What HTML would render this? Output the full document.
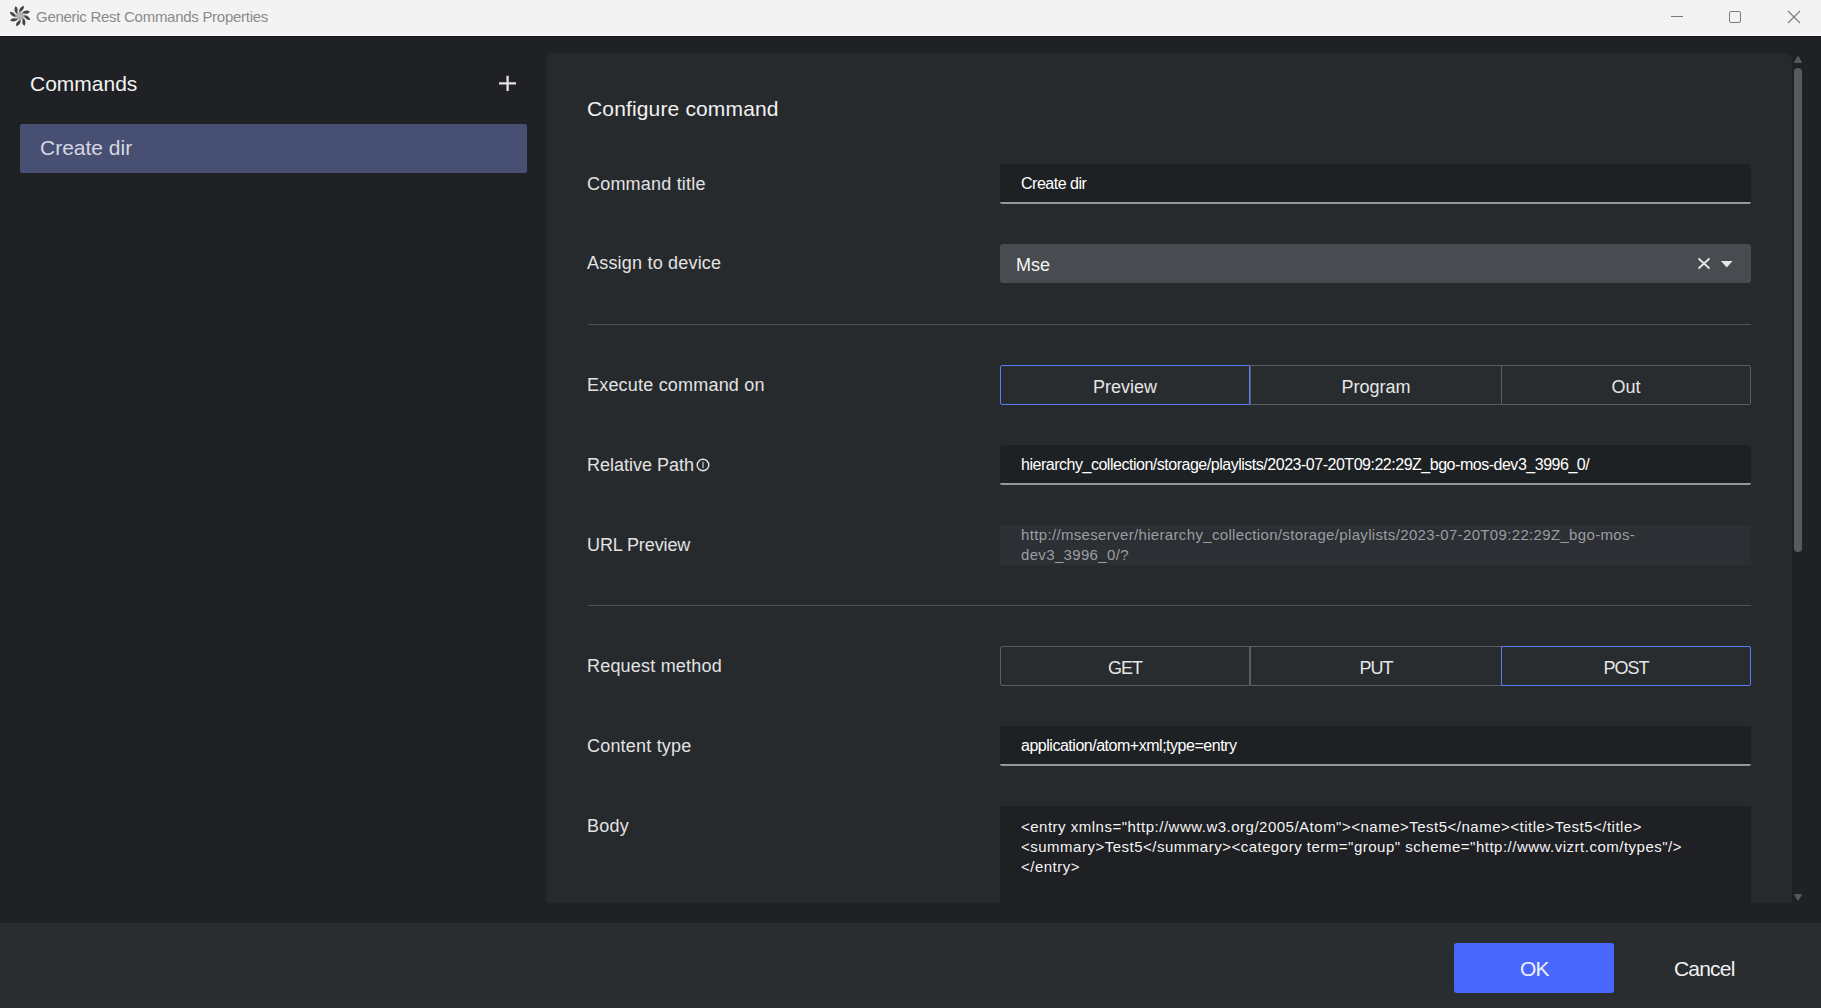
<!DOCTYPE html>
<html><head><meta charset="utf-8">
<style>
*{margin:0;padding:0;box-sizing:border-box}
html,body{width:1821px;height:1008px;overflow:hidden;background:#1f2125;font-family:"Liberation Sans",sans-serif}
.a{position:absolute}
.nw{white-space:nowrap;line-height:1}
#titlebar{left:0;top:0;width:1821px;height:35px;background:#f3f3f3}
#tline{left:0;top:35px;width:1821px;height:1px;background:#ffffff}
#tdark{left:0;top:36px;width:1821px;height:1px;background:#16191d}
.ttl{left:36px;top:9px;font-size:15px;color:#8a8a8a;letter-spacing:-0.28px}
.lbl{color:#e2e2e2;font-size:18px;left:587px;letter-spacing:0.2px}
#panel{left:547px;top:53px;width:1245px;height:850px;background:#262a2d;border-radius:7px 7px 0 0}
.inp{left:1000px;width:751px;height:40px;background:#1e2124;border-bottom:2px solid #979797;border-radius:2px 2px 2px 2px;background-clip:padding-box}
.txt{left:1021px;color:#ffffff;font-size:16px;letter-spacing:-0.48px;margin-top:1px}
.seg{height:40px;top:0;border:1px solid #5a5d61;background:#282c2f;color:#e6e6e6;font-size:18px;text-align:center;line-height:38px;padding-top:2px}
.act{border-color:#5c7cf6}
.div{left:588px;width:1163px;height:1px;background:#505357}
#footer{left:0;top:923px;width:1821px;height:85px;background:#2a2d30}
</style></head><body>
<div class="a" id="titlebar"></div>
<div class="a" id="tline"></div>
<div class="a" id="tdark"></div>
<svg class="a" style="left:8px;top:4px" width="24" height="24" viewBox="-12 -12 24 24"><circle r="3.6" fill="#b4b4b4"/><g fill="#9a9a9a"><path d="M -2.2,-3.4 C -1.4,-3.9 -0.9,-4.4 -0.5,-5.2 L 0.1,-5 C -0.3,-3.6 -0.8,-2.5 -1.5,-1.8 Z" transform="rotate(-22)"/><path d="M -2.2,-3.4 C -1.4,-3.9 -0.9,-4.4 -0.5,-5.2 L 0.1,-5 C -0.3,-3.6 -0.8,-2.5 -1.5,-1.8 Z" transform="rotate(23)"/><path d="M -2.2,-3.4 C -1.4,-3.9 -0.9,-4.4 -0.5,-5.2 L 0.1,-5 C -0.3,-3.6 -0.8,-2.5 -1.5,-1.8 Z" transform="rotate(68)"/><path d="M -2.2,-3.4 C -1.4,-3.9 -0.9,-4.4 -0.5,-5.2 L 0.1,-5 C -0.3,-3.6 -0.8,-2.5 -1.5,-1.8 Z" transform="rotate(113)"/><path d="M -2.2,-3.4 C -1.4,-3.9 -0.9,-4.4 -0.5,-5.2 L 0.1,-5 C -0.3,-3.6 -0.8,-2.5 -1.5,-1.8 Z" transform="rotate(158)"/><path d="M -2.2,-3.4 C -1.4,-3.9 -0.9,-4.4 -0.5,-5.2 L 0.1,-5 C -0.3,-3.6 -0.8,-2.5 -1.5,-1.8 Z" transform="rotate(203)"/><path d="M -2.2,-3.4 C -1.4,-3.9 -0.9,-4.4 -0.5,-5.2 L 0.1,-5 C -0.3,-3.6 -0.8,-2.5 -1.5,-1.8 Z" transform="rotate(248)"/><path d="M -2.2,-3.4 C -1.4,-3.9 -0.9,-4.4 -0.5,-5.2 L 0.1,-5 C -0.3,-3.6 -0.8,-2.5 -1.5,-1.8 Z" transform="rotate(293)"/></g><g fill="#464646"><path d="M -2.2,-3.4 C -3.6,-5.5 -3.2,-8.8 -0.6,-10.8 C 0.9,-9.4 0.8,-7 -0.6,-5.2 C -1,-4.5 -1.6,-3.9 -2.2,-3.4 Z" transform="rotate(-22)"/><path d="M -2.2,-3.4 C -3.6,-5.5 -3.2,-8.8 -0.6,-10.8 C 0.9,-9.4 0.8,-7 -0.6,-5.2 C -1,-4.5 -1.6,-3.9 -2.2,-3.4 Z" transform="rotate(23)"/><path d="M -2.2,-3.4 C -3.6,-5.5 -3.2,-8.8 -0.6,-10.8 C 0.9,-9.4 0.8,-7 -0.6,-5.2 C -1,-4.5 -1.6,-3.9 -2.2,-3.4 Z" transform="rotate(68)"/><path d="M -2.2,-3.4 C -3.6,-5.5 -3.2,-8.8 -0.6,-10.8 C 0.9,-9.4 0.8,-7 -0.6,-5.2 C -1,-4.5 -1.6,-3.9 -2.2,-3.4 Z" transform="rotate(113)"/><path d="M -2.2,-3.4 C -3.6,-5.5 -3.2,-8.8 -0.6,-10.8 C 0.9,-9.4 0.8,-7 -0.6,-5.2 C -1,-4.5 -1.6,-3.9 -2.2,-3.4 Z" transform="rotate(158)"/><path d="M -2.2,-3.4 C -3.6,-5.5 -3.2,-8.8 -0.6,-10.8 C 0.9,-9.4 0.8,-7 -0.6,-5.2 C -1,-4.5 -1.6,-3.9 -2.2,-3.4 Z" transform="rotate(203)"/><path d="M -2.2,-3.4 C -3.6,-5.5 -3.2,-8.8 -0.6,-10.8 C 0.9,-9.4 0.8,-7 -0.6,-5.2 C -1,-4.5 -1.6,-3.9 -2.2,-3.4 Z" transform="rotate(248)"/><path d="M -2.2,-3.4 C -3.6,-5.5 -3.2,-8.8 -0.6,-10.8 C 0.9,-9.4 0.8,-7 -0.6,-5.2 C -1,-4.5 -1.6,-3.9 -2.2,-3.4 Z" transform="rotate(293)"/></g></svg>
<div class="a nw ttl">Generic Rest Commands Properties</div>
<!-- window controls -->
<div class="a" style="left:1671px;top:16px;width:12px;height:1px;background:#7a7a7a"></div>
<div class="a" style="left:1729px;top:11px;width:12px;height:12px;border:1px solid #7a7a7a;border-radius:2px"></div>
<svg class="a" style="left:1787px;top:10px" width="14" height="14" viewBox="0 0 14 14"><path d="M1,1 L13,13 M13,1 L1,13" stroke="#7a7a7a" stroke-width="1.1"/></svg>

<!-- sidebar -->
<div class="a nw" style="left:30px;top:73px;font-size:21px;color:#f2f2f2">Commands</div>
<svg class="a" style="left:495px;top:72px" width="24" height="24" viewBox="0 0 24 24"><path d="M4,11.4 L21,11.4 M12.6,3.8 L12.6,19" stroke="#e4e4e4" stroke-width="2.3"/></svg>
<div class="a" style="left:20px;top:124px;width:507px;height:49px;background:#474f73;border-radius:2px"></div>
<div class="a nw" style="left:40px;top:137px;font-size:21px;color:#d6d8e2">Create dir</div>

<!-- panel -->
<div class="a" id="panel"></div>
<div class="a nw" style="left:587px;top:98px;font-size:21px;color:#f2f2f2;letter-spacing:0.15px">Configure command</div>

<div class="a nw lbl" style="top:175px">Command title</div>
<div class="a inp" style="top:164px"></div>
<div class="a nw txt" style="top:175px">Create dir</div>

<div class="a nw lbl" style="top:254px">Assign to device</div>
<div class="a" style="left:1000px;top:244px;width:751px;height:39px;background:#484b4f;border-radius:3px"></div>
<div class="a nw" style="left:1016px;top:256px;font-size:18px;color:#f4f4f4">Mse</div>
<svg class="a" style="left:1696px;top:256px" width="40" height="15" viewBox="0 0 40 15">
 <path d="M2.5,2.5 L13.5,12.5 M13.5,2.5 L2.5,12.5" stroke="#e8e8e8" stroke-width="1.7"/>
 <path d="M25,5 L36.5,5 L30.75,11.5 Z" fill="#e8e8e8"/>
</svg>

<div class="a div" style="top:324px"></div>

<div class="a nw lbl" style="top:376px">Execute command on</div>
<div class="a" style="left:1000px;top:365px;width:751px;height:40px">
 <div class="a nw seg" style="left:250px;width:252px;border-radius:0">Program</div>
 <div class="a nw seg" style="left:501px;width:250px;border-radius:0 2px 2px 0">Out</div>
 <div class="a nw seg act" style="left:0;width:250px;border-radius:2px 0 0 2px">Preview</div>
</div>

<div class="a nw lbl" style="top:456px;letter-spacing:0">Relative Path</div>
<svg class="a" style="left:696px;top:458px" width="14" height="14" viewBox="0 0 14 14">
 <circle cx="7" cy="7" r="5.8" fill="none" stroke="#e6e6e6" stroke-width="1.4"/>
 <path d="M7,3.8 L7,10.2" stroke="#dcdcdc" stroke-width="1.1"/>
</svg>
<div class="a inp" style="top:445px"></div>
<div class="a nw txt" style="top:456px">hierarchy_collection/storage/playlists/2023-07-20T09:22:29Z_bgo-mos-dev3_3996_0/</div>

<div class="a nw lbl" style="top:536px;letter-spacing:-0.1px">URL Preview</div>
<div class="a" style="left:1000px;top:525px;width:751px;height:40px;background:#2c2f33"></div>
<div class="a" style="left:1021px;top:525px;width:720px;font-size:15px;line-height:20px;color:#9b9ea2;letter-spacing:0.34px">http://mseserver/hierarchy_collection/storage/playlists/2023-07-20T09:22:29Z_bgo-mos-<br>dev3_3996_0/?</div>

<div class="a div" style="top:605px"></div>

<div class="a nw lbl" style="top:657px">Request method</div>
<div class="a" style="left:1000px;top:646px;width:751px;height:40px">
 <div class="a nw seg" style="left:0;width:250px;border-radius:2px 0 0 2px;letter-spacing:-1px">GET</div>
 <div class="a nw seg" style="left:250px;width:252px;border-radius:0;letter-spacing:-1px">PUT</div>
 <div class="a nw seg act" style="left:501px;width:250px;border-radius:0 2px 2px 0;letter-spacing:-1px">POST</div>
</div>

<div class="a nw lbl" style="top:737px">Content type</div>
<div class="a inp" style="top:726px"></div>
<div class="a nw txt" style="top:737px">application/atom+xml;type=entry</div>

<div class="a nw lbl" style="top:817px">Body</div>
<div class="a" style="left:1000px;top:806px;width:751px;height:97px;background:#1e2023"></div>
<div class="a" style="left:1021px;top:817px;width:720px;font-size:15px;line-height:20px;color:#f4f4f4;white-space:pre;letter-spacing:0.5px">&lt;entry xmlns="http://www.w3.org/2005/Atom"&gt;&lt;name&gt;Test5&lt;/name&gt;&lt;title&gt;Test5&lt;/title&gt;
&lt;summary&gt;Test5&lt;/summary&gt;&lt;category term="group" scheme="http://www.vizrt.com/types"/&gt;
&lt;/entry&gt;</div>

<!-- scrollbar -->
<svg class="a" style="left:1793px;top:55px" width="10" height="10" viewBox="0 0 10 10"><path d="M1.8,7.3 L5,1.8 L8.2,7.3 Z" fill="#55595d" stroke="#55595d" stroke-width="1.4" stroke-linejoin="round"/></svg>
<div class="a" style="left:1794px;top:68px;width:8px;height:484px;background:#575b5f;border-radius:4px"></div>
<svg class="a" style="left:1793px;top:893px" width="10" height="9" viewBox="0 0 10 9"><path d="M1.8,1.6 L8.2,1.6 L5,6.8 Z" fill="#55595d" stroke="#55595d" stroke-width="1.4" stroke-linejoin="round"/></svg>

<div class="a" id="footer"></div>
<div class="a" style="left:1454px;top:943px;width:160px;height:50px;background:#4a67fd;border-radius:3px"></div>
<div class="a nw" style="left:1520px;top:958px;font-size:21px;color:#eef0ff;letter-spacing:-0.8px">OK</div>
<div class="a nw" style="left:1674px;top:958px;font-size:21px;color:#f0f0f0;letter-spacing:-0.8px">Cancel</div>
</body></html>
